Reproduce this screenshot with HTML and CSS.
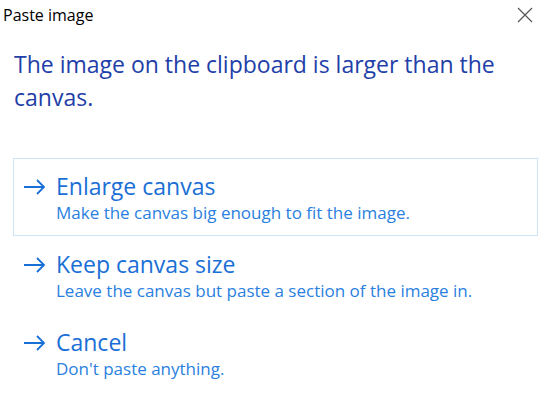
FILE: index.html
```html
<!DOCTYPE html>
<html>
<head>
<meta charset="utf-8">
<link rel="stylesheet" href="styles.css">
</head>
<body>
<div class="dialog">
  <div class="titlebar">
    <span class="title">Paste image</span>
    <svg class="close" width="16" height="16" viewBox="0 0 16 16"><path d="M1 1L15 15M15 1L1 15" stroke="#555" stroke-width="1.2" fill="none"/></svg>
  </div>
  <h1 class="heading">The image on the clipboard is larger than the canvas.</h1>
  <div class="options">
    <div class="option selected">
      <svg class="arrow" width="23" height="16" viewBox="0 0 23 16"><path d="M1 8H21M14 1L21 8L14 15" stroke="#1a6fd6" stroke-width="1.8" fill="none"/></svg>
      <div class="text">
        <div class="opt-title">Enlarge canvas</div>
        <div class="opt-sub">Make the canvas big enough to fit the image.</div>
      </div>
    </div>
    <div class="option">
      <svg class="arrow" width="23" height="16" viewBox="0 0 23 16"><path d="M1 8H21M14 1L21 8L14 15" stroke="#1a6fd6" stroke-width="1.8" fill="none"/></svg>
      <div class="text">
        <div class="opt-title">Keep canvas size</div>
        <div class="opt-sub">Leave the canvas but paste a section of the image in.</div>
      </div>
    </div>
    <div class="option">
      <svg class="arrow" width="23" height="16" viewBox="0 0 23 16"><path d="M1 8H21M14 1L21 8L14 15" stroke="#1a6fd6" stroke-width="1.8" fill="none"/></svg>
      <div class="text">
        <div class="opt-title">Cancel</div>
        <div class="opt-sub">Don't paste anything.</div>
      </div>
    </div>
  </div>
</div>
</body>
</html>
```
FILE: styles.css
```css
html, body {
  margin: 0;
  padding: 0;
  background: #fff;
}
body {
  font-family: "Open Sans", "Noto Sans", sans-serif;
  width: 550px;
  height: 402px;
  overflow: hidden;
}
.dialog {
  display: flex;
  flex-direction: column;
}
.titlebar {
  display: flex;
  justify-content: space-between;
  align-items: flex-start;
  padding: 4px 17px 0 3px;
  height: 34px;
}
.title {
  font-size: 16px;
  color: #000;
  line-height: 22px;
}
.close {
  margin-top: 3px;
}
.heading {
  margin: 10px 0 0 14px;
  width: 520px;
  font-weight: normal;
  font-size: 23px;
  line-height: 33px;
  color: #1e40a8;
}
.options {
  display: flex;
  flex-direction: column;
  margin: 44px 12px 0 13px;
}
.option {
  display: flex;
  align-items: flex-start;
  border: 1px solid transparent;
  height: 76px;
  padding: 0 0 0 9px;
}
.option.selected {
  border-color: #cce4f7;
}
.arrow {
  margin-top: 20px;
  margin-right: 10px;
  flex: none;
}
.text {
  padding-top: 12px;
}
.opt-title {
  font-size: 23px;
  line-height: 30px;
  color: #1a6fd6;
}
.opt-sub {
  font-size: 17px;
  line-height: 24px;
  color: #2a7fdf;
}
```
